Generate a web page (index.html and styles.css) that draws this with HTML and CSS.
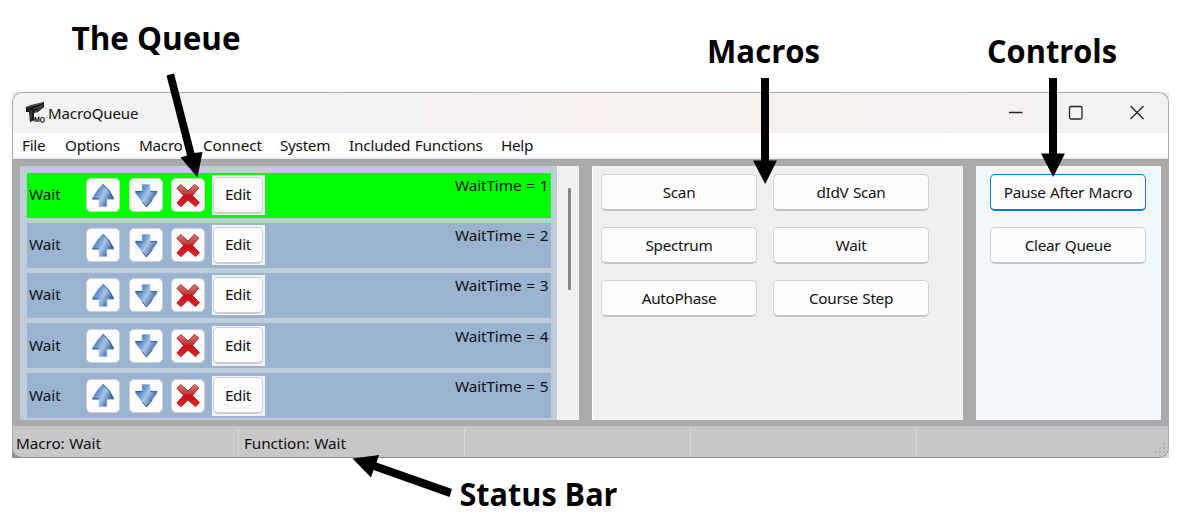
FILE: index.html
```
<!DOCTYPE html>
<html lang="en">
<head>
<meta charset="utf-8">
<title>MacroQueue</title>
<link rel="stylesheet" href="styles.css">
</head>
<body>
<svg class="defs" width="0" height="0" aria-hidden="true">
  <defs>
    <linearGradient id="blue" x1="0" y1="0" x2="1" y2=".6">
      <stop offset="0" stop-color="#3f71b5"/><stop offset=".3" stop-color="#5486c4"/><stop offset=".6" stop-color="#a8c5e6"/><stop offset="1" stop-color="#2c5896"/>
    </linearGradient>
    <linearGradient id="red" x1="0" y1="0" x2="0" y2="1">
      <stop offset="0" stop-color="#d87878"/><stop offset=".4" stop-color="#c04040"/><stop offset=".5" stop-color="#c81015"/><stop offset="1" stop-color="#e0282c"/>
    </linearGradient>
    <symbol id="up" viewBox="0 0 24 26"><path d="M12 1 L18 7 L23 15.500 V17 H16 V24.500 H8 V17 H1 V15.500 L6.500 7 Z" fill="url(#blue)" stroke="#8fb2dc" stroke-width=".5"/><path d="M12 1.500 L18 7.500 L23 16 M1 16.500 H7.500" fill="none" stroke="#24497c" stroke-width=".9"/></symbol>
    <symbol id="down" viewBox="0 0 24 26"><path d="M8 1.500 H16 V8.500 H23.500 V10.500 L18.500 17.500 L12.500 25 L6.500 17.500 L1 10.500 V8.500 H8 Z" fill="url(#blue)" stroke="#8fb2dc" stroke-width=".5"/><path d="M1 9 H8 M16.500 9 H23.500 M18.500 17.500 L12.500 25 L8 19.500" fill="none" stroke="#24497c" stroke-width=".9"/></symbol>
    <symbol id="cross" viewBox="0 0 24 24"><path d="M.8 4.800 L4.800 1 L12 7.500 L18.500 .8 L22.800 4.500 L16.500 12 L23.500 19 L19.500 23.200 L12 16.500 L5 23.200 L.8 19.500 L7.500 12 Z" fill="url(#red)" stroke="#a81014" stroke-width=".8" stroke-linejoin="round"/></symbol>
  </defs>
</svg>
<div class="desktop">
<div class="window">
  <header class="titlebar">
    <svg class="logo" viewBox="0 0 20 21" width="20" height="21"><path d="M0 5 L5 3 L18 0 V5 L12 10 L8 11 V17 L9 18 L4 20 L3 10 L0 10 Z" fill="#1b1b1b"/><path d="M2 5 L16 1 M8 7 L17 3 M5 9 V17 M9 10 L16 5" stroke="#777" stroke-width=".7"/><text x="8" y="20" class="logo-text">MQ</text></svg>
    <span class="title">MacroQueue</span>
    <svg class="winbtns" width="138" height="20" viewBox="0 0 138 20"><path d="M1 9.500H14.500" /><rect x="61.500" y="3.500" width="12.500" height="12.500" rx="1.500"/><path d="M122.500 3 L135.500 16 M135.500 3 L122.500 16"/></svg>
  </header>
  <nav class="menu">
    <span class="m1">File</span><span class="m2">Options</span><span class="m3">Macro</span><span class="m4">Connect</span><span class="m5">System</span><span class="m6">Included Functions</span><span class="m7">Help</span>
  </nav>
  <main class="body">
    <section class="queue">
      <div class="rows">
        <div class="row active"><span class="name">Wait</span><button class="ic"><svg><use href="#up"/></svg></button><button class="ic"><svg><use href="#down"/></svg></button><button class="ic"><svg><use href="#cross"/></svg></button><span class="editbox"><button class="edit">Edit</button></span><span class="param">WaitTime = 1</span></div>
        <div class="row"><span class="name">Wait</span><button class="ic"><svg><use href="#up"/></svg></button><button class="ic"><svg><use href="#down"/></svg></button><button class="ic"><svg><use href="#cross"/></svg></button><span class="editbox"><button class="edit">Edit</button></span><span class="param">WaitTime = 2</span></div>
        <div class="row"><span class="name">Wait</span><button class="ic"><svg><use href="#up"/></svg></button><button class="ic"><svg><use href="#down"/></svg></button><button class="ic"><svg><use href="#cross"/></svg></button><span class="editbox"><button class="edit">Edit</button></span><span class="param">WaitTime = 3</span></div>
        <div class="row"><span class="name">Wait</span><button class="ic"><svg><use href="#up"/></svg></button><button class="ic"><svg><use href="#down"/></svg></button><button class="ic"><svg><use href="#cross"/></svg></button><span class="editbox"><button class="edit">Edit</button></span><span class="param">WaitTime = 4</span></div>
        <div class="row"><span class="name">Wait</span><button class="ic"><svg><use href="#up"/></svg></button><button class="ic"><svg><use href="#down"/></svg></button><button class="ic"><svg><use href="#cross"/></svg></button><span class="editbox"><button class="edit">Edit</button></span><span class="param">WaitTime = 5</span></div>
      </div>
      <div class="scroll"><div class="thumb"></div></div>
    </section>
    <section class="macros">
      <button class="btn">Scan</button><button class="btn">dIdV Scan</button>
      <button class="btn">Spectrum</button><button class="btn">Wait</button>
      <button class="btn">AutoPhase</button><button class="btn">Course Step</button>
    </section>
    <section class="controls">
      <button class="btn focus">Pause After Macro</button>
      <button class="btn">Clear Queue</button>
    </section>
  </main>
  <footer class="status">
    <span class="s1">Macro: Wait</span><span>Function: Wait</span><span></span><span></span><span></span>
    <svg class="grip" width="12" height="12" viewBox="0 0 12 12"><path d="M8 0h2v2h-2zM4 4h2v2h-2zM8 4h2v2h-2zM0 8h2v2h-2zM4 8h2v2h-2zM8 8h2v2h-2z"/></svg>
  </footer>
</div>
</div>
<svg class="notes" width="1182" height="514" viewBox="0 0 1182 514">
  <path d="M166.500 75.500 L174 73.500 L194.500 153 L202.500 152 L197.500 177.500 L180.500 157.500 L187 155.500 Z"/>
  <path d="M761 78 H769 V160.500 H777 L765.200 184 L753 160.500 H761 Z"/>
  <path d="M1049 78 H1057 V153.500 H1065 L1053.200 177 L1041 153.500 H1049 Z"/>
  <path d="M352.500 458.500 L379 455 L376.500 462.500 L452 489 L449.500 497 L373.500 470 L371 477.500 Z"/>
  <text x="71.500" y="50" textLength="169" lengthAdjust="spacingAndGlyphs">The Queue</text>
  <text x="707" y="63" textLength="113" lengthAdjust="spacingAndGlyphs">Macros</text>
  <text x="987" y="63" textLength="130" lengthAdjust="spacingAndGlyphs">Controls</text>
  <text x="459.500" y="505.500" textLength="158" lengthAdjust="spacingAndGlyphs">Status Bar</text>
</svg>
</body>
</html>
```
FILE: styles.css
```
* { box-sizing: border-box; }
body { margin: 0; width: 1182px; height: 514px; padding: 92px 13px 0 12px; background: #fff; overflow: hidden; font: 15.3px/20px "Noto Sans", "Open Sans", sans-serif; letter-spacing: -.3px; word-spacing: .8px; color: #111; }
.defs { position: absolute; }
button { font: inherit; letter-spacing: inherit; word-spacing: inherit; color: #111; padding: 0; margin: 0; white-space: nowrap; }
.desktop { width: 1157px; height: 366px; background: linear-gradient(#eee 50%, transparent 50%), linear-gradient(90deg, #87929e 50%, #d4d4d4 50%); }
.window { width: 1157px; height: 366px; border: 1px solid #aaa; border-bottom: 1.500px solid #8c8f92; border-radius: 10px; background: #ababab; overflow: hidden; display: flex; flex-direction: column; }
.titlebar { height: 40px; flex: none; display: flex; align-items: center; padding: 0 22px 1px 13px; background: linear-gradient(90deg, #f2f2f2 25%, #f7f0ef 50%, #f6f0ef 70%, #f3f2f2); }
.logo-text { font: bold 7px "Liberation Sans", sans-serif; letter-spacing: -.2px; }
.title { margin-left: 2px; font-size: 15px; letter-spacing: -.1px; }
.winbtns { margin-left: auto; fill: none; stroke: #222; stroke-width: 1.3; }
.menu { height: 26px; flex: none; background: #fff; border-bottom: 2px solid #f0f0f0; display: flex; align-items: center; padding-left: 9px; }
.menu span { white-space: nowrap; }
.m1 { width: 43px; }
.m2 { width: 74px; }
.m3 { width: 64px; }
.m4 { width: 77px; }
.m5 { width: 69px; }
.m6 { width: 152px; }
.menu .m4 { letter-spacing: -.05px; }
.menu .m6 { letter-spacing: -.2px; }
.body { height: 267px; flex: none; display: flex; padding: 6px 0 6px 7px; border-top: 1px solid #a2a2a2; }
.queue { width: 559px; display: flex; background: #bfcddb; }
.rows { width: 537px; padding: 6.600px 6.500px 0; display: grid; grid-auto-rows: 45px; row-gap: 5.200px; align-content: start; overflow: hidden; }
.row { display: flex; align-items: center; background: #99b3d1; padding-left: 2.500px; }
.active { background: #0f0; }
.name { width: 57px; padding-bottom: 2px; letter-spacing: -.1px; }
.ic { width: 34px; height: 34px; flex: none; margin-right: 8.500px; border: 1px solid #d0d0d0; border-radius: 5px; background: #fdfdfd; display: flex; align-items: center; justify-content: center; }
.ic svg { width: 24px; height: 25px; }
.editbox { width: 53px; height: 40px; flex: none; margin-left: -2px; background: #f4f4f4; padding: 1.500px; }
.edit { width: 50px; height: 37px; border: 1px solid #ccc; border-bottom-width: 2px; border-radius: 5px; background: #fdfdfd; padding-bottom: 1px; }
.param { margin-left: auto; align-self: flex-start; padding: 2.500px 2px 0 0; white-space: nowrap; letter-spacing: -.1px; word-spacing: 1px; }
.scroll { width: 22px; background: #f0f0f0; border-left: 1px solid #fff; padding: 22px 0 0 10px; }
.thumb { width: 3px; height: 102px; background: #868686; border-radius: 1px; }
.macros { width: 371px; margin-left: 13px; background: #f0f0f0; border-left: 1px solid #fff; padding: 8px 0 0 8px; display: grid; grid-template-columns: 156px 156px; grid-auto-rows: 37px; gap: 16px; align-content: start; }
.btn { width: 156px; height: 37px; border: 1px solid #d0d0d0; border-bottom: 2px solid #c4c4c4; border-radius: 5px; background: #fdfdfd; padding-bottom: 1px; }
.controls { width: 185px; margin-left: 13px; background: #f3f7fc; padding: 8px 0 0 14px; display: flex; flex-direction: column; gap: 16px; }
.focus { border: 1px solid #0078d4; border-bottom-width: 2px; }
.status { flex: 1; display: flex; background: #c8c8c8; padding-top: 2px; position: relative; }
.status span { width: 226px; height: 28px; padding: 5px 0 0 5px; border-left: 1px solid #d8d8d8; letter-spacing: -.1px; }
.status .s1 { width: 225px; padding-left: 3px; border-left: 0; }
.grip { position: absolute; right: 1px; bottom: 2px; fill: #b0b0b0; }
.notes { position: absolute; left: 0; top: 0; font: bold 33px "Open Sans", sans-serif; letter-spacing: 0; word-spacing: 0; fill: #000; pointer-events: none; }
```
